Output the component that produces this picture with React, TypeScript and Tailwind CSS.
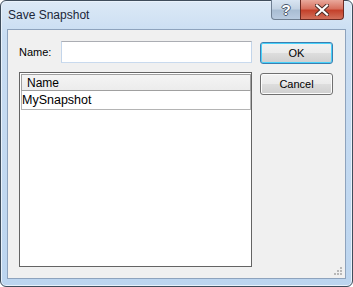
import type { ReactNode } from 'react';

const uiFont = { fontFamily: '"Liberation Sans", Arial, sans-serif' };

function DialogButton({ children, isDefault = false }: { children: ReactNode; isDefault?: boolean }) {
  return (
    <button
      type="button"
      className={`relative flex h-[22px] w-[73px] items-center justify-center rounded-[3px] border text-[11px] text-black ${
        isDefault ? 'border-[#3c7fb1] shadow-[inset_0_0_0_1px_#48d2fb]' : 'border-[#707070] shadow-[inset_0_0_0_1px_#fcfcfc]'
      } bg-[linear-gradient(to_bottom,#f2f2f2_0%,#ebebeb_48%,#dddddd_52%,#cfcfcf_100%)]`}
    >
      {children}
    </button>
  );
}

function TitleButtons() {
  return (
    <div className="flex h-[20px] self-start">
      <div className="flex w-[30px] items-center justify-center rounded-bl-[4px] border border-t-0 border-[#6f7f92] bg-[linear-gradient(to_bottom,#d9e5f2_0%,#c4d3e3_45%,#a9bdd3_55%,#b9cbe0_100%)]">
        <span
          className="text-[15px] font-bold leading-none text-white [text-shadow:1px_0_#4a5a6e,-1px_0_#4a5a6e,0_1px_#4a5a6e,0_-1px_#4a5a6e]"
          style={uiFont}
        >
          ?
        </span>
      </div>
      <div className="-ml-px flex w-[44px] items-center justify-center rounded-br-[4px] border border-t-0 border-[#6d2a22] bg-[linear-gradient(to_bottom,#e9a99c_0%,#d7715f_45%,#c4412b_55%,#d2705b_100%)]">
        <svg width="14" height="12" viewBox="0 0 14 12">
          <path d="M2 1.5 L12 10.5 M12 1.5 L2 10.5" stroke="#4b2a24" strokeWidth="4" strokeLinecap="square" />
          <path d="M2 1.5 L12 10.5 M12 1.5 L2 10.5" stroke="#ffffff" strokeWidth="2.2" strokeLinecap="square" />
        </svg>
      </div>
    </div>
  );
}

function SizeGrip() {
  const dots = [
    [6, 0],
    [3, 3],
    [6, 3],
    [0, 6],
    [3, 6],
    [6, 6],
  ];
  return (
    <svg width="9" height="9" viewBox="0 0 9 9" className="absolute bottom-[2px] right-[2px]">
      {dots.map(([x, y]) => (
        <rect key={`${x}-${y}`} x={x} y={y} width="2" height="2" fill="#b8b8b8" />
      ))}
    </svg>
  );
}

export default function App() {
  return (
    <div className="h-[287px] w-[353px] bg-white" style={uiFont}>
      <div className="flex h-full w-full flex-col rounded-[6px] border border-[#3f4d5c] bg-[linear-gradient(to_bottom,#dce9f6_0%,#c9ddf2_12%,#bcd5ef_100%)] shadow-[inset_0_0_0_1px_#e9f2fb]">
        <div className="flex h-[28px] items-start pl-[7px] pr-[8px]">
          <span className="mt-[7px] flex-1 text-[12px] leading-[14px] text-[#1b2638]">Save Snapshot</span>
          <div className="-mt-px">
            <TitleButtons />
          </div>
        </div>

        <div className="mx-[6px] mb-[7px] flex flex-1 border border-[#8ea3bd]">
          <div className="relative flex flex-1 gap-[8px] bg-[#f0f0f0] pl-[11px] pt-[11px]">
            <div className="flex w-[233px] flex-col">
              <div className="flex h-[22px] items-center">
                <label className="w-[42px] text-[11px] text-black">Name:</label>
                <div className="h-[22px] flex-1 border border-[#abadb3] border-x-[#c3d5ea] border-b-[#c9daee] bg-white" />
              </div>

              <div className="mt-[9px] flex h-[195px] flex-col border border-[#646464] bg-white p-px">
                <div className="flex h-[17px] w-[230px] items-center border border-[#a0a0a0] bg-[linear-gradient(to_bottom,#f4f4f4,#ececec)] pl-[5px] text-[12px] text-black">
                  Name
                </div>
                <div className="flex h-[19px] w-[230px] items-center border border-t-0 border-[#b4b4b4] text-[12.5px] text-black">
                  MySnapshot
                </div>
              </div>
            </div>

            <div className="flex flex-col gap-[9px] pt-px">
              <DialogButton isDefault>OK</DialogButton>
              <DialogButton>Cancel</DialogButton>
            </div>

            <SizeGrip />
          </div>
        </div>
      </div>
    </div>
  );
}
